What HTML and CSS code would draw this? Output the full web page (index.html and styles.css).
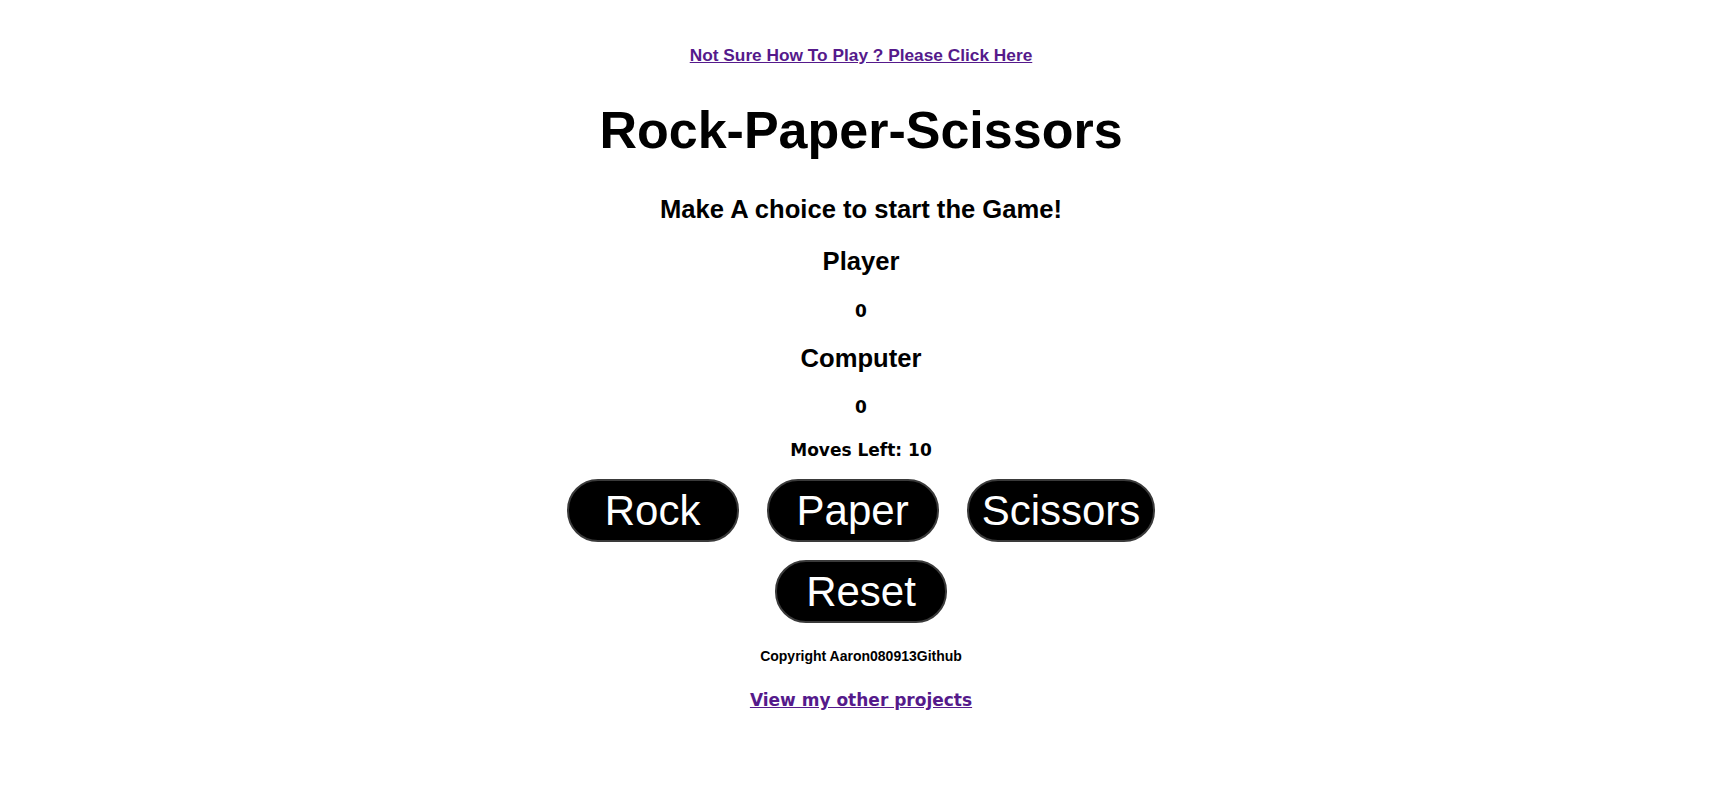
FILE: index.html
```html
<!DOCTYPE html>
<html lang="en">
<head>
<meta charset="utf-8">
<title>Rock-Paper-Scissors</title>
<link rel="stylesheet" href="styles.css">
</head>
<body>
<main class="page">
  <a class="help-link" href="#">Not Sure How To Play ? Please Click Here</a>
  <h1 class="title">Rock-Paper-Scissors</h1>
  <h2 class="message">Make A choice to start the Game!</h2>
  <h2 class="label label-player">Player</h2>
  <p class="score score-player">0</p>
  <h2 class="label label-computer">Computer</h2>
  <p class="score score-computer">0</p>
  <p class="moves">Moves Left: 10</p>
  <div class="choices">
    <button class="btn">Rock</button>
    <button class="btn">Paper</button>
    <button class="btn">Scissors</button>
  </div>
  <div class="reset-row">
    <button class="btn">Reset</button>
  </div>
  <p class="copyright">Copyright Aaron080913Github</p>
  <a class="projects-link" href="#">View my other projects</a>
</main>
</body>
</html>
```

FILE: styles.css
```css
html, body {
  margin: 0;
  padding: 0;
  background: #ffffff;
}

body {
  font-family: "Liberation Sans", Arial, sans-serif;
  color: #000000;
}

.page {
  display: flex;
  flex-direction: column;
  align-items: center;
  text-align: center;
}

.help-link {
  margin-top: 45px;
  font-size: 17.3px;
  line-height: 20px;
  font-weight: 700;
  color: #551a8b;
  text-decoration: underline;
}

.title {
  margin: 35px 0 0;
  font-size: 52px;
  line-height: 60px;
  font-weight: 700;
}

.message,
.label {
  margin: 0;
  font-size: 25.6px;
  line-height: 29px;
  font-weight: 700;
}

.message {
  margin-top: 35px;
}

.label-player {
  margin-top: 23px;
}

.label-computer {
  margin-top: 23px;
}

.score,
.moves,
.projects-link {
  font-family: "DejaVu Sans", Verdana, sans-serif;
  font-weight: 700;
  font-size: 17px;
  line-height: 20px;
  margin: 0;
}

.score-player {
  margin-top: 25px;
}

.score-computer {
  margin-top: 24px;
}

.moves {
  margin-top: 23px;
}

.choices {
  display: flex;
  gap: 28px;
  margin-top: 19px;
}

.reset-row {
  display: flex;
  margin-top: 18px;
}

.btn {
  box-sizing: border-box;
  min-width: 172px;
  padding: 0 13px;
  border: 2px solid #3a3a3a;
  border-radius: 31px;
  background: #000000;
  color: #ffffff;
  font-family: "Liberation Sans", Arial, sans-serif;
  font-size: 42px;
  line-height: 59px;
  cursor: pointer;
}

.copyright {
  margin: 25px 0 0;
  font-size: 14px;
  line-height: 16px;
  font-weight: 700;
}

.projects-link {
  margin-top: 26px;
  color: #551a8b;
  text-decoration: underline;
}
```
